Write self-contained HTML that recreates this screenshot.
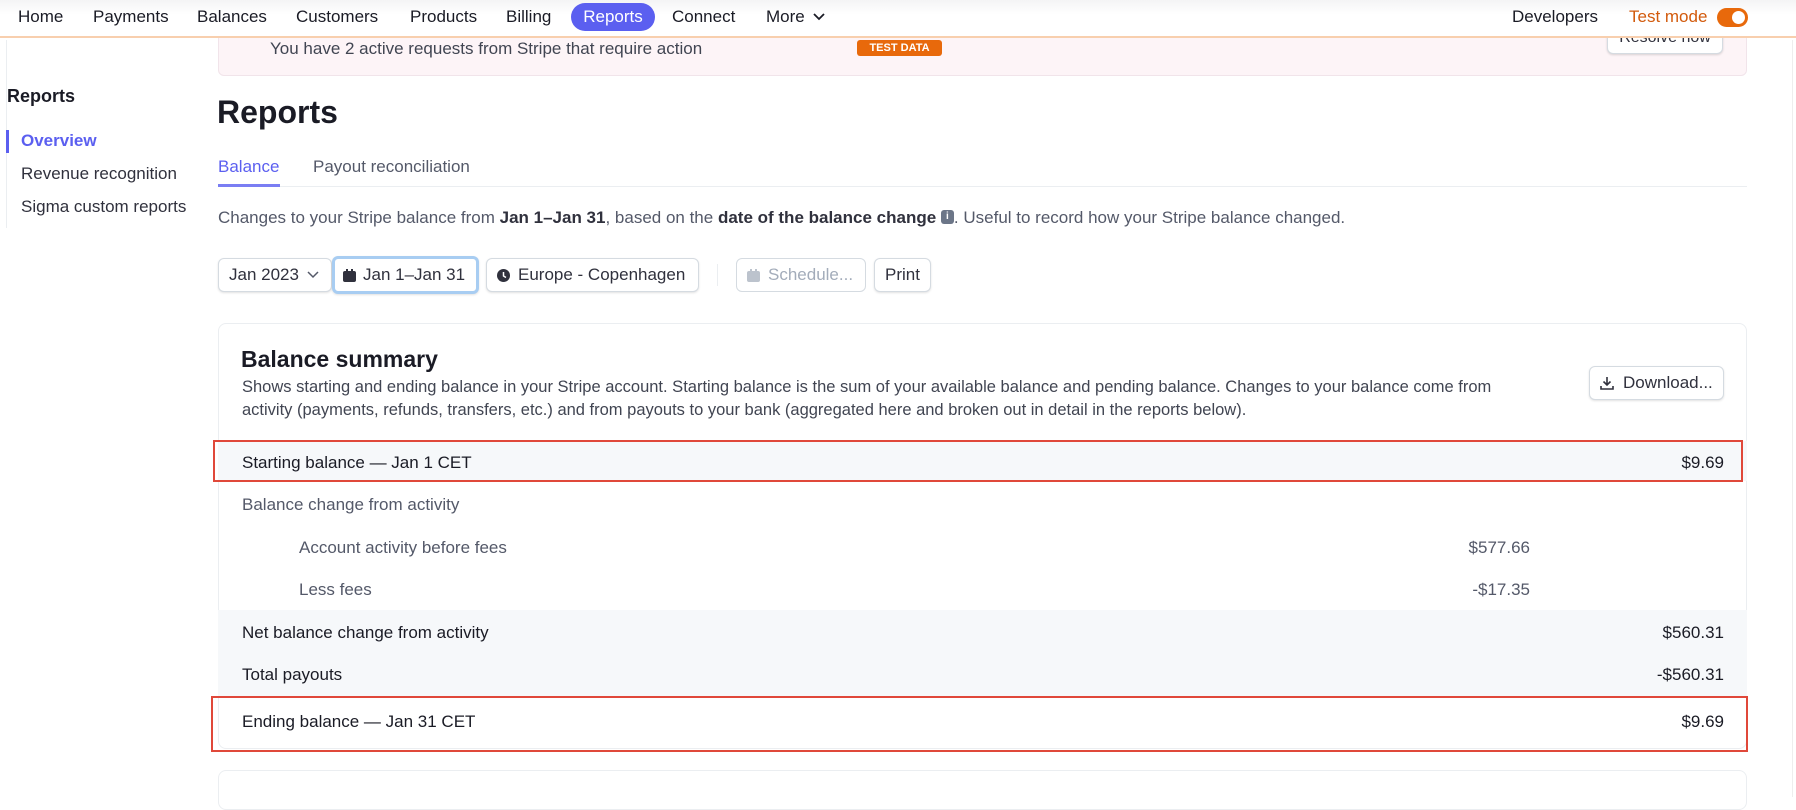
<!DOCTYPE html>
<html><head><meta charset="utf-8"><style>
*{margin:0;padding:0;box-sizing:border-box}
body{width:1796px;height:797px;overflow:hidden;background:#fff;font-family:"Liberation Sans",sans-serif;color:#30313d;position:relative}
.a{position:absolute;white-space:nowrap}
.nav{position:absolute;left:0;top:0;width:1796px;height:38px;background:linear-gradient(#f4f4f5,#fff 40%);border-bottom:2px solid #f8cfae}
.nav span{position:absolute;top:7px;font-size:17px;color:#1a1b25}
.btn{position:absolute;border:1px solid #d5dbe1;border-radius:6px;background:#fff;box-shadow:0 1px 2px rgba(0,0,0,.12);font-size:17px;color:#30313d;display:flex;align-items:center;padding:0 10px;gap:8px;white-space:nowrap}
.row{position:absolute;left:218px;width:1529px;font-size:17px}
.row .l{position:absolute;left:24px}
.row .r{position:absolute;right:23px}
.red{position:absolute;border:2px solid #e0483a}
</style></head><body>
<div class="a" style="left:218px;top:30px;width:1529px;height:46px;background:#fdf4f7;border:1px solid #f1e4ea;border-radius:6px"></div>
<div class="a" style="left:270px;top:39px;font-size:17px;color:#414552">You have 2 active requests from Stripe that require action</div>
<div class="a" style="left:857px;top:40px;width:85px;height:16px;background:#e8690b;color:#fff;font-size:11px;font-weight:bold;text-align:center;line-height:16px;border-radius:3px">TEST DATA</div>
<div class="a" style="left:1607px;top:20px;width:116px;height:34px;border:1px solid #d5dbe1;border-radius:6px;background:#fff;box-shadow:0 1px 2px rgba(0,0,0,.15);font-size:16px;text-align:center;line-height:34px;color:#30313d">Resolve now</div>
<div class="nav">
<span style="left:18px">Home</span><span style="left:93px">Payments</span><span style="left:197px">Balances</span><span style="left:296px">Customers</span><span style="left:410px">Products</span><span style="left:506px">Billing</span>
<span style="left:571px;top:3px;width:84px;height:28px;background:#5b5ff0;color:#fff;border-radius:14px;text-align:center;line-height:28px">Reports</span>
<span style="left:672px">Connect</span><span style="left:766px">More <svg width="14" height="10" viewBox="0 0 14 10" style="margin-left:3px"><path d="M2 2l5 5 5-5" fill="none" stroke="#1a1b25" stroke-width="1.8"/></svg></span>
<span style="left:1512px">Developers</span><span style="left:1629px;color:#d25a0c">Test mode</span>
<span style="left:1717px;top:8px;width:31px;height:19px;background:#e8690b;border-radius:10px"><i style="position:absolute;right:3px;top:3px;width:13px;height:13px;border-radius:50%;background:#fff"></i></span>
</div>
<div class="a" style="left:6px;top:40px;width:1px;height:188px;background:#ebeef1"></div>
<div class="a" style="left:7px;top:86px;font-size:18px;font-weight:bold;color:#1a1b25">Reports</div>
<div class="a" style="left:6px;top:130px;width:3px;height:23px;background:#5b5ff0"></div>
<div class="a" style="left:21px;top:131px;font-size:17px;font-weight:bold;color:#5b5ff0">Overview</div>
<div class="a" style="left:21px;top:164px;font-size:17px;color:#30313d">Revenue recognition</div>
<div class="a" style="left:21px;top:197px;font-size:17px;color:#30313d">Sigma custom reports</div>
<div class="a" style="left:217px;top:94px;font-size:32px;font-weight:bold;color:#1a1b25">Reports</div>
<div class="a" style="left:218px;top:157px;font-size:17px;color:#5b5ff0">Balance</div>
<div class="a" style="left:313px;top:157px;font-size:17px;color:#545969">Payout reconciliation</div>
<div class="a" style="left:218px;top:186px;width:1529px;height:1px;background:#ebeef1"></div>
<div class="a" style="left:218px;top:184px;width:62px;height:3px;background:#7a7ef3"></div>
<div class="a" style="left:218px;top:208px;font-size:17px;color:#545969">Changes to your Stripe balance from <b style="color:#30313d;font-weight:600">Jan 1–Jan 31</b>, based on the <b style="color:#30313d;font-weight:600">date of the balance change</b> <span style="display:inline-block;width:13px;height:14px;background:#6c7688;border-radius:3px;vertical-align:middle;margin-top:-3px;color:#fff;font-size:10px;font-weight:bold;text-align:center;line-height:14px">i</span>. Useful to record how your Stripe balance changed.</div>
<div class="btn" style="left:218px;top:258px;width:114px;height:34px">Jan 2023 <svg width="12" height="8"><path d="M1 1l5 5 5-5" fill="none" stroke="#545969" stroke-width="1.5"/></svg></div>
<div class="btn" style="left:332px;top:256px;width:147px;height:38px;border:3px solid #a8cdf2;padding:0 8px;gap:7px">
<svg width="13" height="13"><rect x="0" y="2" width="13" height="11" rx="2" fill="#30313d"/><rect x="3" y="0" width="2" height="3" fill="#30313d"/><rect x="8" y="0" width="2" height="3" fill="#30313d"/></svg>Jan 1–Jan 31</div>
<div class="btn" style="left:486px;top:258px;width:213px;height:34px"><svg width="13" height="13"><circle cx="6.5" cy="6.5" r="6.5" fill="#30313d"/><path d="M6.5 3v4l2.5 1.5" stroke="#fff" stroke-width="1.5" fill="none"/></svg>Europe - Copenhagen</div>
<div class="a" style="left:717px;top:264px;width:1px;height:22px;background:#ebeef1"></div>
<div class="btn" style="left:736px;top:258px;width:130px;height:34px;color:#a3acba;box-shadow:none"><svg width="13" height="13"><rect x="0" y="2" width="13" height="11" rx="2" fill="#bcc3cd"/><rect x="3" y="0" width="2" height="3" fill="#bcc3cd"/><rect x="8" y="0" width="2" height="3" fill="#bcc3cd"/></svg>Schedule...</div>
<div class="btn" style="left:874px;top:258px;width:57px;height:34px">Print</div>
<div class="a" style="left:218px;top:323px;width:1529px;height:426px;border:1px solid #ebeef1;border-radius:8px"></div>
<div class="a" style="left:218px;top:770px;width:1529px;height:40px;border:1px solid #ebeef1;border-radius:8px"></div>
<div class="a" style="left:241px;top:346px;font-size:23px;font-weight:bold;color:#1a1b25">Balance summary</div>
<div class="a" style="left:242px;top:376px;font-size:16.5px;line-height:23px;color:#414552;white-space:normal;width:1290px">Shows starting and ending balance in your Stripe account. Starting balance is the sum of your available balance and pending balance. Changes to your balance come from activity (payments, refunds, transfers, etc.) and from payouts to your bank (aggregated here and broken out in detail in the reports below).</div>
<div class="btn" style="left:1589px;top:366px;width:135px;height:34px;gap:9px"><svg width="14" height="14"><path d="M7 1v8M3.5 5.5L7 9l3.5-3.5M1 10v3h12v-3" fill="none" stroke="#30313d" stroke-width="1.6"/></svg>Download...</div>
<div class="row" style="top:441px;height:40px;background:#f6f8fa"></div>
<div class="row" style="top:610px;height:86px;background:#f6f8fa"></div>
<div class="row" style="top:453px;color:#1a1b25"><span class="l">Starting balance — Jan 1 CET</span><span class="r">$9.69</span></div>
<div class="row" style="top:495px;color:#545969"><span class="l">Balance change from activity</span></div>
<div class="row" style="top:538px;color:#545969"><span class="l" style="left:81px">Account activity before fees</span><span class="r" style="right:217px">$577.66</span></div>
<div class="row" style="top:580px;color:#545969"><span class="l" style="left:81px">Less fees</span><span class="r" style="right:217px">-$17.35</span></div>
<div class="row" style="top:623px;color:#1a1b25"><span class="l">Net balance change from activity</span><span class="r">$560.31</span></div>
<div class="row" style="top:665px;color:#1a1b25"><span class="l">Total payouts</span><span class="r">-$560.31</span></div>
<div class="row" style="top:712px;color:#1a1b25"><span class="l">Ending balance — Jan 31 CET</span><span class="r">$9.69</span></div>
<div class="red" style="left:213px;top:440px;width:1530px;height:42px"></div>
<div class="red" style="left:211px;top:696px;width:1537px;height:56px"></div>
<div class="a" style="left:1792px;top:40px;width:1px;height:757px;background:#eee"></div>
</body></html>
